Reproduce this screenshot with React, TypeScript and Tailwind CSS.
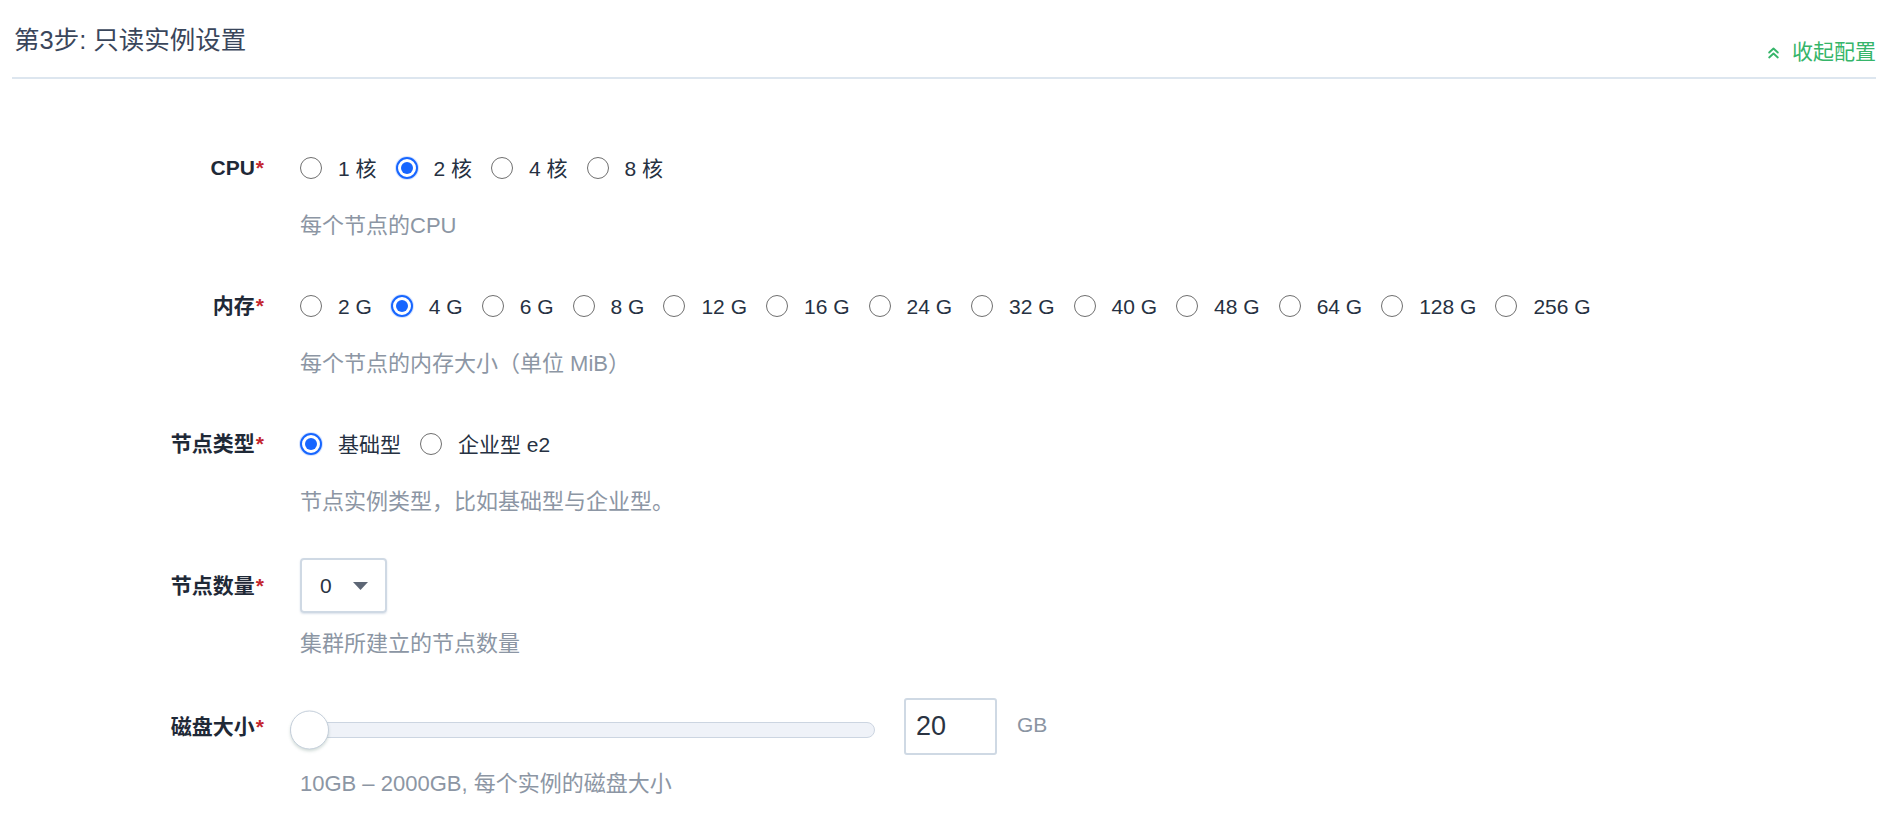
import type { ReactNode } from "react";

const cpuOptions = ["1 核", "2 核", "4 核", "8 核"];
const memoryOptions = [
  "2 G",
  "4 G",
  "6 G",
  "8 G",
  "12 G",
  "16 G",
  "24 G",
  "32 G",
  "40 G",
  "48 G",
  "64 G",
  "128 G",
  "256 G"
];
const nodeTypes = ["基础型", "企业型 e2"];

function Radio({ checked }: { checked: boolean }) {
  if (checked) {
    return (
      <span className="flex h-[22px] w-[22px] shrink-0 items-center justify-center rounded-full border-2 border-[#1766ff] bg-white shadow-[0_0_0_1px_rgba(23,102,255,0.18)]">
        <span className="h-[12px] w-[12px] rounded-full bg-[#1766ff]" />
      </span>
    );
  }
  return (
    <span className="h-[22px] w-[22px] shrink-0 rounded-full border-[1.5px] border-[#6f6f6f] bg-white" />
  );
}

function RadioGroup({ options, value }: { options: string[]; value: string }) {
  return (
    <div className="flex h-full items-center gap-x-[19px]">
      {options.map((option) => (
        <label key={option} className="flex cursor-pointer items-center gap-4">
          <Radio checked={option === value} />
          <span className="whitespace-nowrap text-[21px] leading-none text-[#263142]">
            {option}
          </span>
        </label>
      ))}
    </div>
  );
}

function FormItem({
  label,
  rowClass,
  help,
  helpClass,
  className,
  children
}: {
  label: string;
  rowClass: string;
  help: string;
  helpClass: string;
  className?: string;
  children: ReactNode;
}) {
  return (
    <div className={`grid grid-cols-[252px_1fr] items-start gap-x-9 ${className ?? ""}`}>
      <div
        className={`flex items-center justify-end text-[21px] font-semibold text-[#1f2937] ${rowClass}`}
      >
        {label}
        <span className="ml-[1px] text-[#c3262f]">*</span>
      </div>
      <div>
        <div className={`flex items-center ${rowClass}`}>{children}</div>
        <p className={`text-[22px] leading-[30px] text-[#8c96a4] ${helpClass}`}>{help}</p>
      </div>
    </div>
  );
}

export default function App() {
  return (
    <div className="h-[826px] w-[1888px] overflow-hidden bg-white px-3 font-['Liberation_Sans','Noto_Sans_CJK_SC',sans-serif]">
      <div className="flex h-[79px] items-start justify-between border-b-2 border-[#dde6ef]">
        <h2 className="pl-[2px] pt-[22px] text-[25.5px] leading-[36px] text-[#3a465b]">
          第3步: 只读实例设置
        </h2>
        <button className="flex items-center gap-3 pt-[38px] text-[21px] leading-[28px] text-[#36b56a]">
          <svg width="13" height="13" viewBox="0 0 12 12" fill="none">
            <path
              d="M2 6 L6 2.3 L10 6 M2 10.6 L6 6.9 L10 10.6"
              stroke="currentColor"
              strokeWidth="1.7"
              strokeLinecap="round"
              strokeLinejoin="round"
            />
          </svg>
          收起配置
        </button>
      </div>

      <div className="pt-[69px]">
        <FormItem
          label="CPU"
          rowClass="h-[40px]"
          help="每个节点的CPU"
          helpClass="mt-[23px]"
          className="mb-[45px]"
        >
          <RadioGroup options={cpuOptions} value="2 核" />
        </FormItem>

        <FormItem
          label="内存"
          rowClass="h-[40px]"
          help="每个节点的内存大小（单位 MiB）"
          helpClass="mt-[23px]"
          className="mb-[45px]"
        >
          <RadioGroup options={memoryOptions} value="4 G" />
        </FormItem>

        <FormItem
          label="节点类型"
          rowClass="h-[40px]"
          help="节点实例类型，比如基础型与企业型。"
          helpClass="mt-[23px]"
          className="mb-[41px]"
        >
          <RadioGroup options={nodeTypes} value="基础型" />
        </FormItem>

        <FormItem
          label="节点数量"
          rowClass="h-[55px]"
          help="集群所建立的节点数量"
          helpClass="mt-[16px]"
          className="mb-[39px]"
        >
          <div className="flex h-[55px] w-[87px] items-center rounded-[4px] border-2 border-[#cfd9e4] pl-[18px] shadow-[0_1px_2px_rgba(150,170,195,0.35)]">
            <span className="text-[21px] text-[#2a3342]">0</span>
            <svg className="ml-[21px]" width="15" height="8" viewBox="0 0 15 8">
              <path d="M0 0 H15 L7.5 8 Z" fill="#5d6675" />
            </svg>
          </div>
        </FormItem>

        <FormItem
          label="磁盘大小"
          rowClass="h-[57px]"
          help="10GB – 2000GB, 每个实例的磁盘大小"
          helpClass="mt-[14px]"
        >
          <div className="relative -ml-[10px] mt-[6px] flex h-[40px] w-[585px] items-center">
            <div className="h-[16px] w-full rounded-full border-[1.5px] border-[#ccd5e1] bg-[#eff2f8]" />
            <div className="absolute left-0 top-1/2 h-[39px] w-[39px] -translate-y-1/2 rounded-full border-[1.5px] border-[#c5cfdb] bg-white shadow-[0_2px_3px_rgba(120,150,140,0.3)]" />
          </div>
          <input
            readOnly
            value="20"
            className="ml-[29px] h-[57px] w-[93px] rounded-[3px] border-2 border-[#cfd9e4] pl-[10px] text-[27px] text-[#2a3342] outline-none"
          />
          <span className="-mt-[4px] ml-[20px] text-[21px] text-[#8a94a2]">GB</span>
        </FormItem>
      </div>
    </div>
  );
}
